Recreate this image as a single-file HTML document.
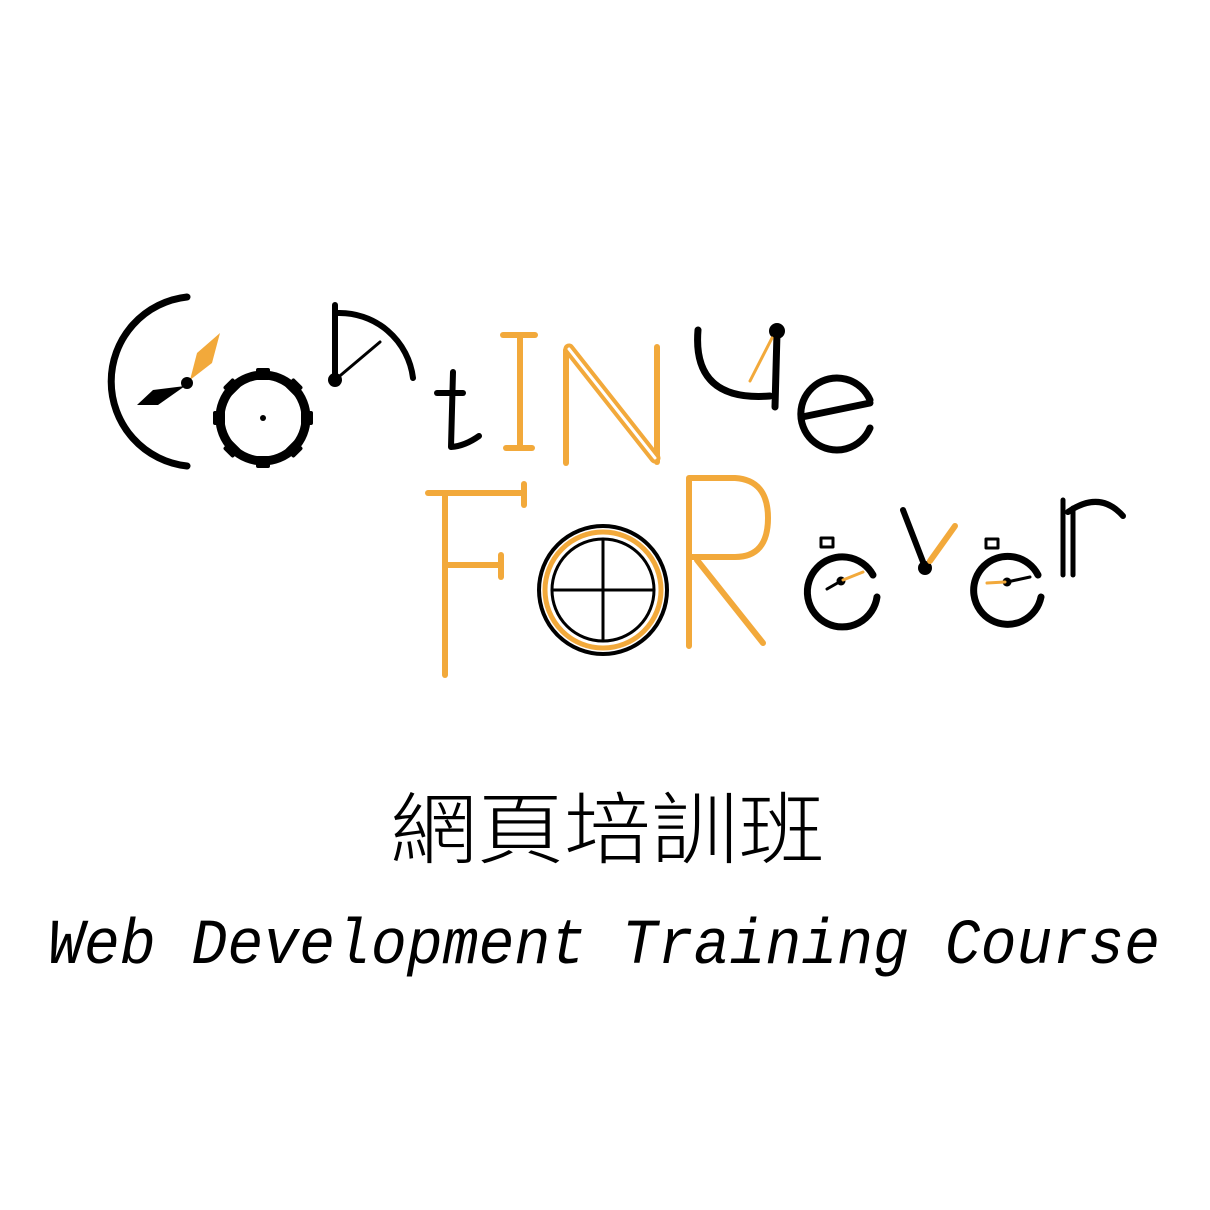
<!DOCTYPE html>
<html><head><meta charset="utf-8"><style>
html,body{margin:0;padding:0;background:#fff;}
svg{display:block}
</style></head><body>
<svg width="1210" height="1210" viewBox="0 0 1210 1210" xmlns="http://www.w3.org/2000/svg">
<rect width="1210" height="1210" fill="#fff"/>
<g fill="none" stroke="#000" stroke-linecap="round" stroke-linejoin="round">
<!-- C -->
<path d="M187,297 A85,85 0 0 0 187,466" stroke-width="7"/>
<!-- gear -->
<circle cx="263" cy="418" r="43" stroke-width="9"/>
<!-- n -->
<line x1="335" y1="305" x2="335" y2="380" stroke-width="6"/>
<path d="M337,313 A74,74 0 0 1 413,378" stroke-width="6"/>
<line x1="335" y1="380" x2="380" y2="342" stroke-width="3"/>
<!-- t -->
<path d="M453,372 L451,447 Q465,446 479,436" stroke-width="6"/>
<line x1="437" y1="393" x2="463" y2="393" stroke-width="6"/>
<!-- u -->
<path d="M698,330 Q692,402 770,396" stroke-width="7"/>
<line x1="777" y1="333" x2="775" y2="407" stroke-width="7"/>
<!-- e -->
<path d="M870,400 A36,36 0 1 0 870,428" stroke-width="7"/>
<line x1="802" y1="417" x2="870" y2="403" stroke-width="7"/>
<!-- O rings -->
<circle cx="603" cy="590" r="64" stroke-width="4"/>
<circle cx="603" cy="590" r="51" stroke-width="3"/>
<line x1="552" y1="590" x2="654" y2="590" stroke-width="3"/>
<line x1="603" y1="539" x2="603" y2="641" stroke-width="3"/>
<!-- e1 -->
<path d="M873,575 A35,35 0 1 0 877,597" stroke-width="7"/>
<rect x="821" y="538" width="12" height="9" stroke-width="3"/>
<line x1="827" y1="589" x2="841" y2="581" stroke-width="3"/>
<!-- v -->
<line x1="903" y1="510" x2="925" y2="567" stroke-width="6"/>
<!-- e2 -->
<path d="M1038,575 A34,34 0 1 0 1041,597" stroke-width="7"/>
<rect x="986" y="539" width="12" height="9" stroke-width="3"/>
<line x1="1007" y1="582" x2="1030" y2="577" stroke-width="3"/>
<!-- r -->
<line x1="1063" y1="500" x2="1063" y2="575" stroke-width="5"/>
<line x1="1073" y1="508" x2="1073" y2="575" stroke-width="5"/>
<path d="M1068,512 Q1100,490 1123,516" stroke-width="6"/>
</g>
<!-- gear teeth -->
<g fill="#000">
<rect x="256" y="368" width="14" height="12" rx="2" transform="rotate(0 263 418)"/>
<rect x="256" y="368" width="14" height="12" rx="2" transform="rotate(45 263 418)"/>
<rect x="256" y="368" width="14" height="12" rx="2" transform="rotate(90 263 418)"/>
<rect x="256" y="368" width="14" height="12" rx="2" transform="rotate(135 263 418)"/>
<rect x="256" y="368" width="14" height="12" rx="2" transform="rotate(180 263 418)"/>
<rect x="256" y="368" width="14" height="12" rx="2" transform="rotate(225 263 418)"/>
<rect x="256" y="368" width="14" height="12" rx="2" transform="rotate(270 263 418)"/>
<rect x="256" y="368" width="14" height="12" rx="2" transform="rotate(315 263 418)"/>
</g>
<!-- C hands -->
<polygon points="190,380 197,353 220,333 212,363" fill="#F2A93B"/>
<polygon points="185,386 153,390 137,405 158,405" fill="#000"/>
<circle cx="187" cy="383" r="6" fill="#000"/>
<circle cx="263" cy="418" r="3" fill="#000"/>
<circle cx="335" cy="380" r="7" fill="#000"/>
<circle cx="777" cy="331" r="8" fill="#000"/>
<circle cx="841" cy="581" r="4.5" fill="#000"/>
<circle cx="925" cy="568" r="7" fill="#000"/>
<circle cx="1007" cy="582" r="4.5" fill="#000"/>
<g fill="none" stroke="#F2A93B" stroke-linecap="round" stroke-linejoin="round">
<line x1="772" y1="338" x2="750" y2="381" stroke-width="3"/>
<!-- I -->
<line x1="520" y1="335" x2="520" y2="448" stroke-width="6"/>
<line x1="503" y1="335" x2="535" y2="335" stroke-width="6"/>
<line x1="506" y1="448" x2="532" y2="448" stroke-width="6"/>
<!-- N -->
<line x1="566" y1="350" x2="566" y2="463" stroke-width="6"/>
<line x1="657" y1="347" x2="657" y2="462" stroke-width="6"/>
<line x1="569" y1="349" x2="655" y2="458" stroke-width="11"/>
<line x1="569" y1="349" x2="655" y2="458" stroke-width="3" stroke="#fff"/>
<!-- F -->
<line x1="445" y1="493" x2="445" y2="675" stroke-width="6"/>
<line x1="428" y1="493" x2="524" y2="493" stroke-width="6"/>
<line x1="524" y1="484" x2="524" y2="505" stroke-width="6"/>
<line x1="445" y1="565" x2="501" y2="565" stroke-width="6"/>
<line x1="501" y1="555" x2="501" y2="577" stroke-width="6"/>
<!-- O -->
<circle cx="603" cy="590" r="58" stroke-width="5"/>
<!-- R -->
<path d="M689,646 L689,478 L735,478 Q768,480 768,518 Q768,557 735,557 L691,557" stroke-width="6"/>
<line x1="697" y1="560" x2="763" y2="643" stroke-width="6"/>
<!-- hands -->
<line x1="843" y1="580" x2="863" y2="572" stroke-width="3"/>
<line x1="930" y1="561" x2="955" y2="526" stroke-width="6"/>
<line x1="987" y1="583" x2="1005" y2="582" stroke-width="3"/>
</g>
<text x="390" y="857" font-family="'Noto Sans CJK TC','WenQuanYi Zen Hei',sans-serif" font-size="78" font-weight="300" textLength="435" lengthAdjust="spacingAndGlyphs" fill="#000">網頁培訓班</text>
<text x="48" y="963" font-family="'Liberation Mono',monospace" font-style="italic" font-size="64" textLength="1112" lengthAdjust="spacingAndGlyphs" fill="#000">Web Development Training Course</text>
</svg>
</body></html>
